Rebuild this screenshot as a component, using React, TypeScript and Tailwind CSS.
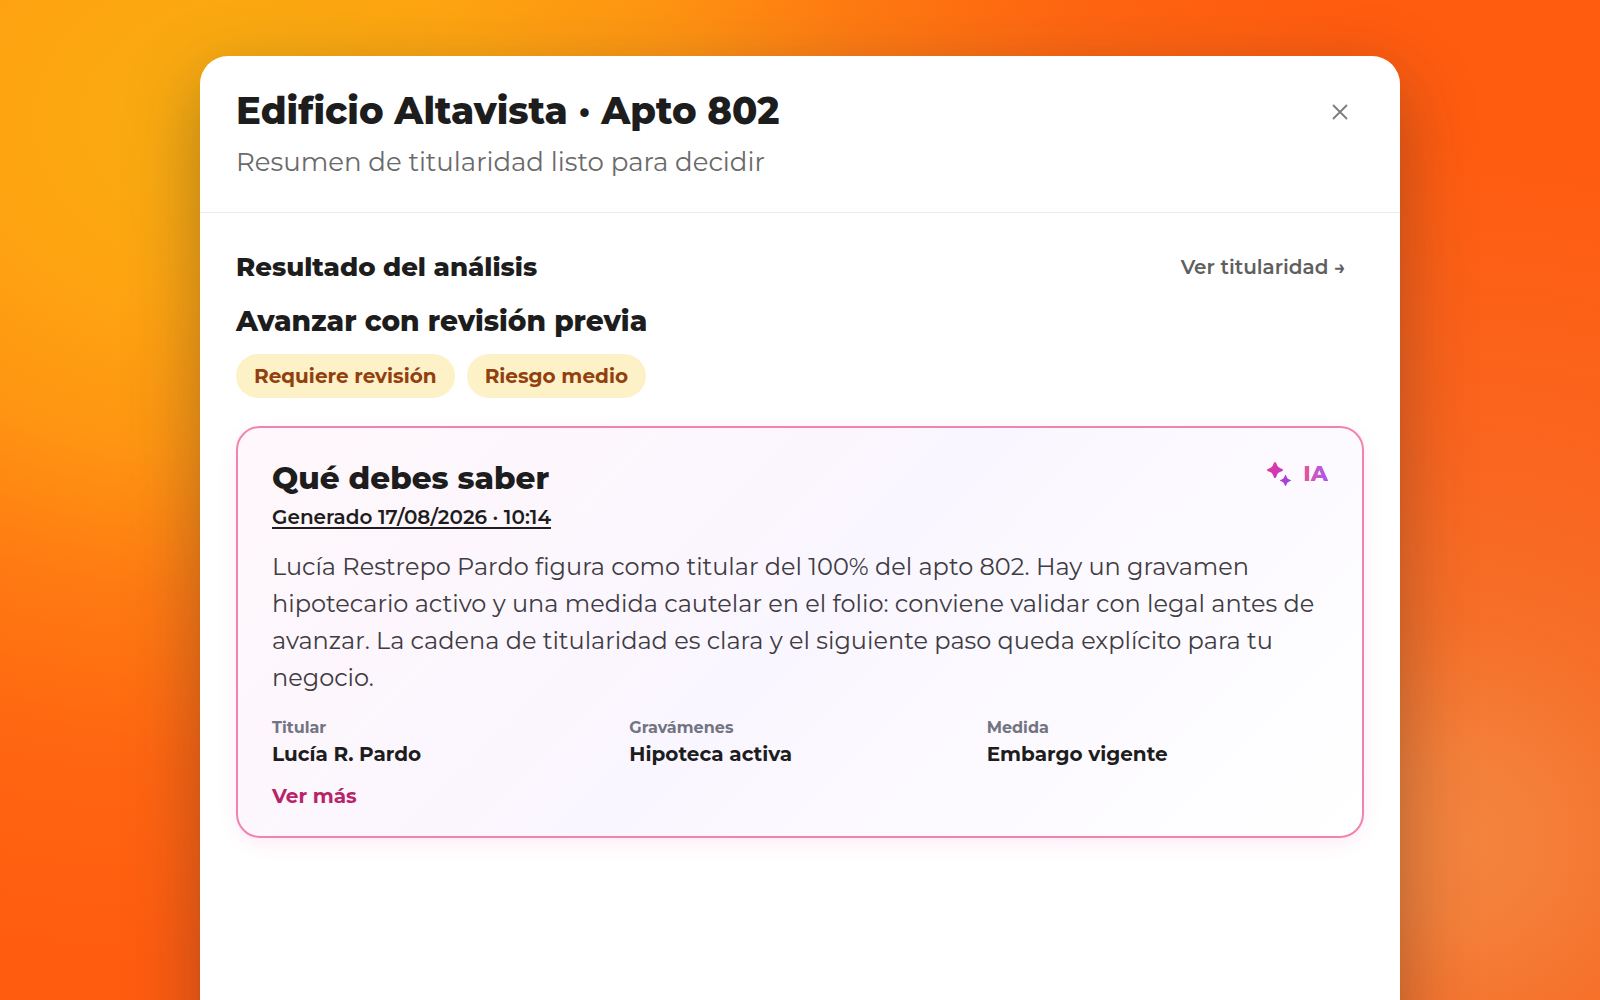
import { useState } from 'react'

const badges = ['Requiere revisión', 'Riesgo medio']

const facts = [
  { label: 'Titular', value: 'Lucía R. Pardo' },
  { label: 'Gravámenes', value: 'Hipoteca activa' },
  { label: 'Medida', value: 'Embargo vigente' },
]

function CloseIcon() {
  return (
    <svg className="size-4" viewBox="0 0 16 16" fill="none" aria-hidden="true">
      <path d="M1.5 1.5l13 13M14.5 1.5l-13 13" stroke="#7c7c7c" strokeWidth="1.8" strokeLinecap="round" />
    </svg>
  )
}

function SparklesIcon() {
  return (
    <svg className="size-6" viewBox="0 0 24 24" aria-hidden="true">
      <defs>
        <linearGradient id="sparkles" x1="0" y1="0" x2="24" y2="24" gradientUnits="userSpaceOnUse">
          <stop stopColor="#ec3b8c" />
          <stop offset="0.5" stopColor="#c936c0" />
          <stop offset="1" stopColor="#8b47ee" />
        </linearGradient>
      </defs>
      <g fill="url(#sparkles)">
        <path d="M8 0C8.8 0 9.2 1 9.8 2.6C10.700 4.700 11.300 5.300 13.400 6.200C15 6.800 16 7.200 16 8C16 8.800 15 9.200 13.400 9.800C11.300 10.700 10.700 11.300 9.800 13.400C9.200 15 8.800 16 8 16C7.200 16 6.800 15 6.200 13.400C5.300 11.300 4.700 10.700 2.600 9.800C1 9.200 0 8.800 0 8C0 7.200 1 6.800 2.600 6.200C4.700 5.300 5.300 4.700 6.200 2.600C6.800 1 7.200 0 8 0Z" />
        <path d="M18.500 13C19 13 19.200 13.600 19.600 14.700C20.200 16.200 20.800 16.800 22.300 17.400C23.400 17.800 24 18 24 18.500C24 19 23.400 19.200 22.300 19.600C20.800 20.200 20.200 20.800 19.600 22.300C19.200 23.400 19 24 18.500 24C18 24 17.800 23.400 17.400 22.300C16.800 20.800 16.200 20.200 14.700 19.600C13.600 19.200 13 19 13 18.500C13 18 13.600 17.800 14.700 17.400C16.200 16.800 16.800 16.200 17.400 14.700C17.800 13.600 18 13 18.500 13Z" />
      </g>
    </svg>
  )
}

export default function App() {
  const [open, setOpen] = useState(true)

  return (
    <main className="flex h-screen justify-center overflow-hidden bg-[radial-gradient(circle_at_91%_84%,#f4843e_0px,#f4803a_80px,#f4742fcc_220px,#f66c2a99_380px,transparent_700px),radial-gradient(1050px_800px_at_15%_12%,#f9ae10_0%,#fea411_24%,#ff9512_42%,#ff7a12_60%,#ff6611_80%,#ff5c10_106%)] pt-14 font-[Montserrat,Inter,sans-serif] text-[#1d1d1d]">
      {open && (
        <section
          role="dialog"
          aria-labelledby="dialog-title"
          className="w-3/4 self-start rounded-t-[28px] bg-white pb-72 shadow-[0_24px_72px_rgba(40,40,40,0.36)]"
        >
          <header className="flex items-start justify-between border-b border-[#ebebeb] px-9 pt-8 pb-[34px]">
            <div>
              <h1 id="dialog-title" className="text-[37px] leading-[46px] font-extrabold">
                Edificio Altavista · Apto 802
              </h1>
              <p className="mt-3 text-[26px] leading-8 text-[#6a6a6a]">
                Resumen de titularidad listo para decidir
              </p>
            </div>
            <button
              type="button"
              aria-label="Cerrar"
              className="flex size-12 items-center justify-center"
              onClick={() => setOpen(false)}
            >
              <CloseIcon />
            </button>
          </header>

          <div className="px-9 pt-8">
            <div className="flex items-center justify-between">
              <h2 className="text-[26px] leading-[44px] font-extrabold">Resultado del análisis</h2>
              <button type="button" className="px-[18px] text-xl leading-[44px] font-semibold text-[#5f5f5f]">
                Ver titularidad →
              </button>
            </div>
            <h3 className="mt-3.5 text-[28px] leading-9 font-extrabold">Avanzar con revisión previa</h3>
            <ul className="mt-[15px] flex gap-3">
              {badges.map((badge) => (
                <li
                  key={badge}
                  className="rounded-full bg-[#fdf1c7] px-[18px] text-xl leading-[44px] font-bold text-[#92400e]"
                >
                  {badge}
                </li>
              ))}
            </ul>

            <article className="mt-7 rounded-3xl border-2 border-[#f283ae] bg-linear-135 from-[#fff7fb] via-[#faf6ff] to-white px-[34px] pt-[30px] pb-6 shadow-[0_6px_18px_rgba(236,72,153,0.1)]">
              <div className="flex items-start justify-between">
                <div>
                  <h3 className="text-[31px] leading-10 font-extrabold">Qué debes saber</h3>
                  <a
                    href="#generado"
                    className="block text-xl leading-[38px] font-semibold underline decoration-2 underline-offset-[3px]"
                  >
                    Generado 17/08/2026 · 10:14
                  </a>
                </div>
                <div className="flex items-center gap-3">
                  <SparklesIcon />
                  <span className="bg-linear-to-r from-[#ec4f8c] to-[#a855f7] bg-clip-text text-[22px] leading-8 font-extrabold text-transparent">
                    IA
                  </span>
                </div>
              </div>
              <p className="mt-3 text-2xl leading-[37px] text-[#3f3c43]">
                Lucía Restrepo Pardo figura como titular del 100% del apto 802. Hay un gravamen hipotecario activo y una
                medida cautelar en el folio: conviene validar con legal antes de avanzar. La cadena de titularidad es
                clara y el siguiente paso queda explícito para tu negocio.
              </p>
              <dl className="mt-5 grid grid-cols-3 gap-4">
                {facts.map((fact) => (
                  <div key={fact.label}>
                    <dt className="text-base leading-6 font-bold text-[#737481]">{fact.label}</dt>
                    <dd className="text-xl leading-7 font-bold">{fact.value}</dd>
                  </div>
                ))}
              </dl>
              <button type="button" className="mt-3 text-xl leading-8 font-bold text-[#b82468]">
                Ver más
              </button>
            </article>
          </div>
        </section>
      )}
    </main>
  )
}
